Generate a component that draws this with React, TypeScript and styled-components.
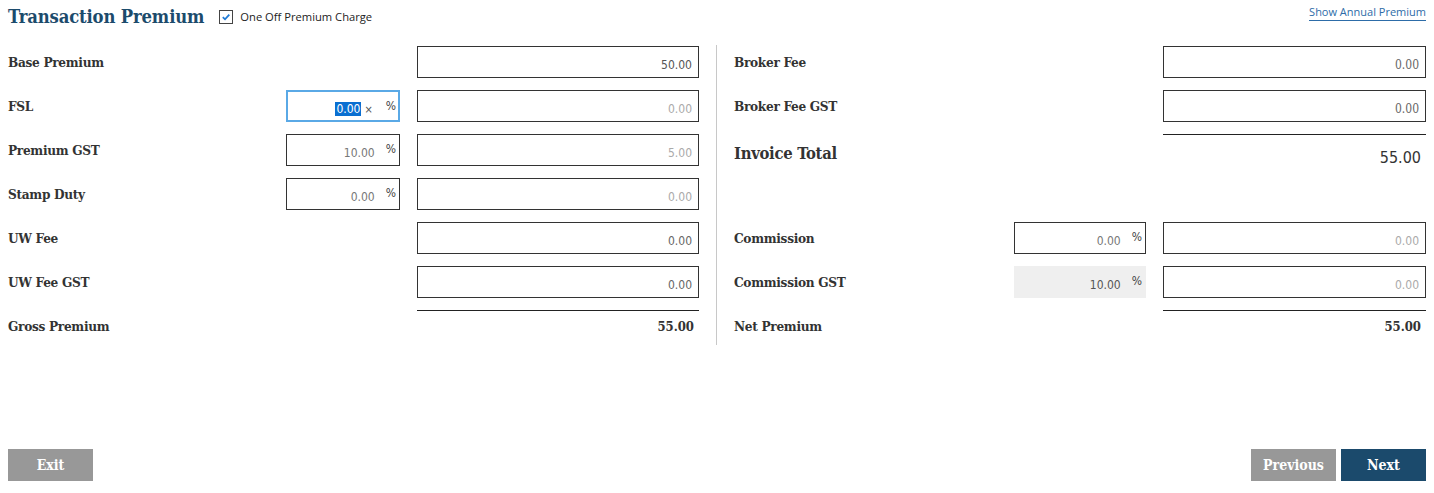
import React from "react";
import styled, { createGlobalStyle, css } from "styled-components";

const Global = createGlobalStyle`
  html, body { margin: 0; padding: 0; background: #fff; }
  body { font-family: "Noto Sans", "DejaVu Sans", sans-serif; color: #333; }
  * { box-sizing: border-box; }
`;

const SLAB = `"DejaVu Serif", serif`;
const NUM = `"DejaVu Sans", sans-serif`;

const Page = styled.div`
  width: 1434px;
  height: 493px;
  padding: 0 8px 12px;
  display: flex;
  flex-direction: column;
`;

const Header = styled.div`
  display: flex;
  align-items: center;
  height: 33px;
`;

const Title = styled.h1`
  margin: 0;
  font-family: ${SLAB};
  font-stretch: condensed;
  font-weight: bold;
  font-size: 18.3px;
  color: #1c4b6c;
  letter-spacing: -0.15px;
`;

const CheckLabel = styled.label`
  display: flex;
  align-items: center;
  gap: 7px;
  margin-left: 15px;
  font-family: "Open Sans", sans-serif;
  font-stretch: 90%;
  font-size: 11.2px;
  color: #222;
`;

const Box = styled.span`
  width: 14px;
  height: 14px;
  border: 1px solid #444;
  display: inline-flex;
  align-items: center;
  justify-content: center;
`;

const LinkText = styled.a`
  margin-left: auto;
  font-family: "Open Sans", sans-serif;
  font-stretch: 90%;
  font-size: 11px;
  color: #2d6ca8;
  text-decoration: none;
  border-bottom: 1.5px solid #2d6ca8;
  padding-bottom: 1px;
  margin-top: -8px;
`;

const Main = styled.div`
  display: flex;
  margin-top: 13px;
`;

const Column = styled.div<{ $pct: number; $amt: number; $w: number }>`
  width: ${(p) => p.$w}px;
  display: grid;
  grid-template-columns: 1fr ${(p) => p.$pct}px ${(p) => p.$amt}px;
  column-gap: 17px;
  row-gap: 12px;
  grid-auto-rows: 32px;
  align-items: center;
`;

const Divider = styled.div`
  width: 1px;
  background: #c8c8c8;
  margin: -1px 17px 0 17px;
  height: 300px;
`;

const Label = styled.div<{ $big?: boolean }>`
  grid-column: 1;
  font-family: ${SLAB};
  font-stretch: condensed;
  font-weight: bold;
  font-size: ${(p) => (p.$big ? "16.5px" : "13.5px")};
  color: #333;
  letter-spacing: -0.3px;
  ${(p) => p.$big && css`align-self: start; padding-top: 10px;`}
`;

const Field = styled.div<{ $muted?: boolean; $dark?: boolean; $serif?: boolean }>`
  grid-column: 3;
  height: 32px;
  border: 1px solid #333;
  display: flex;
  align-items: flex-end;
  justify-content: flex-end;
  padding: 0 6px 5px;
  font-family: ${(p) => (p.$serif ? SLAB : NUM)};
  font-stretch: condensed;
  font-size: 12px;
  color: ${(p) => (p.$dark ? "#555" : p.$muted ? "#aaa" : "#666")};
`;

const PctField = styled.div<{ $focus?: boolean; $grey?: boolean }>`
  grid-column: 2;
  height: 32px;
  border: 1px solid #333;
  display: flex;
  align-items: flex-end;
  justify-content: flex-end;
  padding: 0 3px 5px 6px;
  font-family: ${NUM};
  font-stretch: condensed;
  font-size: 12px;
  color: #777;
  ${(p) =>
    p.$focus &&
    css`
      border: 2px solid #5aa9e6;
      color: #fff;
      padding: 0 2px 4px 5px;
    `}
  ${(p) =>
    p.$grey &&
    css`
      border: none;
      background: #efefef;
      padding: 1px 4px 6px 7px;
      color: #555;
    `}
`;

const Selected = styled.span`
  background: #0a6fd1;
  color: #fff;
  padding: 0 1px;
`;

const Clear = styled.span`
  color: #555;
  font-size: 11px;
  margin-left: 3px;
  margin-right: 13px;
`;

const Pct = styled.span<{ $gap?: number }>`
  align-self: flex-start;
  margin-top: 7px;
  margin-left: ${(p) => p.$gap ?? 11}px;
  color: #444;
  font-size: 12px;
`;

const Total = styled.div<{ $big?: boolean }>`
  grid-column: 3;
  align-self: stretch;
  border-top: 1.5px solid #222;
  display: flex;
  justify-content: flex-end;
  align-items: flex-start;
  padding: ${(p) => (p.$big ? "13px 5px 0" : "8px 5px 0")};
  font-family: ${(p) => (p.$big ? NUM : SLAB)};
  font-stretch: condensed;
  font-weight: ${(p) => (p.$big ? "normal" : "bold")};
  font-size: ${(p) => (p.$big ? "16px" : "13px")};
  color: #333;
`;

const Footer = styled.div`
  margin-top: auto;
  display: flex;
  gap: 5px;
`;

const Button = styled.button<{ $primary?: boolean }>`
  width: 85px;
  height: 32px;
  border: none;
  background: ${(p) => (p.$primary ? "#1b4a6c" : "#989898")};
  color: #fff;
  font-family: ${SLAB};
  font-stretch: condensed;
  font-weight: bold;
  font-size: 14px;
  cursor: pointer;
`;

const Spacer = styled.div`
  flex: 1;
`;

export default function App() {
  return (
    <Page>
      <Global />
      <Header>
        <Title>Transaction Premium</Title>
        <CheckLabel>
          <Box>
            <svg width="10" height="10" viewBox="0 0 10 10">
              <path d="M1.8 5.2 L4 7.3 L8.3 2.6" fill="none" stroke="#1f7ad6" strokeWidth="1.8" />
            </svg>
          </Box>
          One Off Premium Charge
        </CheckLabel>
        <LinkText href="#">Show Annual Premium</LinkText>
      </Header>
      <Main>
        <Column $w={691} $pct={114} $amt={282}>
          <Label>Base Premium</Label>
          <Field $dark>50.00</Field>

          <Label>FSL</Label>
          <PctField $focus>
            <Selected>0.00</Selected>
            <Clear>×</Clear>
            <Pct $gap={0}>%</Pct>
          </PctField>
          <Field $muted>0.00</Field>

          <Label>Premium GST</Label>
          <PctField>
            10.00<Pct>%</Pct>
          </PctField>
          <Field $muted>5.00</Field>

          <Label>Stamp Duty</Label>
          <PctField>
            0.00<Pct>%</Pct>
          </PctField>
          <Field $muted>0.00</Field>

          <Label>UW Fee</Label>
          <Field>0.00</Field>

          <Label>UW Fee GST</Label>
          <Field>0.00</Field>

          <Label>Gross Premium</Label>
          <Total>55.00</Total>
        </Column>
        <Divider />
        <Column $w={692} $pct={132} $amt={263}>
          <Label>Broker Fee</Label>
          <Field $serif>0.00</Field>

          <Label>Broker Fee GST</Label>
          <Field $serif>0.00</Field>

          <Label $big>Invoice Total</Label>
          <Total $big>55.00</Total>

          <Spacer />

          <Label>Commission</Label>
          <PctField>
            0.00<Pct>%</Pct>
          </PctField>
          <Field $muted>0.00</Field>

          <Label>Commission GST</Label>
          <PctField $grey>
            10.00<Pct>%</Pct>
          </PctField>
          <Field $muted>0.00</Field>

          <Label>Net Premium</Label>
          <Total>55.00</Total>
        </Column>
      </Main>
      <Footer>
        <Button>Exit</Button>
        <Spacer />
        <Button>Previous</Button>
        <Button $primary>Next</Button>
      </Footer>
    </Page>
  );
}
